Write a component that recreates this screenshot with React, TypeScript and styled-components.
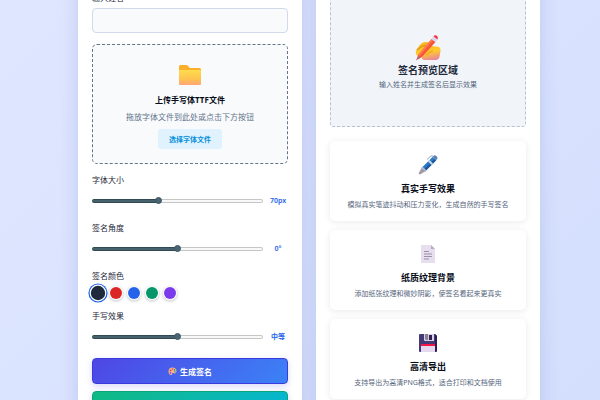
import React, { useState } from "react";
import styled, { createGlobalStyle } from "styled-components";

const GlobalStyle = createGlobalStyle`
  * { box-sizing: border-box; }
  body {
    margin: 0;
    font-family: "Noto Sans", "Noto Sans CJK SC", sans-serif;
    color: #060b18;
  }
  h2, h3, p { margin: 0; }
  button, input { font-family: inherit; }
`;

const Page = styled.main`
  height: 100vh;
  overflow: hidden;
  padding: 0 10% 0 13%;
  background: linear-gradient(135deg, #dfe6ff 0%, #dae3ff 50%, #d3dffd 100%);
`;

const Columns = styled.div`
  display: grid;
  grid-template-columns: 1fr 1fr;
  gap: 14px;
  margin-top: -60px;
`;

const Panel = styled.section`
  min-width: 0;
  padding: 52px 14px 14px;
  background: #ffffff;
  box-shadow: 0 6px 18px rgba(51, 65, 155, 0.16);
`;

const Label = styled.label`
  display: block;
  font-size: 8px;
  line-height: 12px;
  color: #1e293b;
`;

const ColorLegend = styled.legend`
  padding: 0;
  font-size: 8px;
  line-height: 12px;
  color: #1e293b;
`;

const NameInput = styled.input`
  display: block;
  width: 100%;
  height: 25px;
  margin: 4px 0 11px;
  padding: 0 8px;
  font-size: 9px;
  border: 1px solid #d0daea;
  border-radius: 4px;
  background: #f8fafc;
  outline: none;
`;

const UploadBox = styled.div`
  display: flex;
  flex-direction: column;
  align-items: center;
  height: 120px;
  margin-bottom: 10px;
  padding-top: 18px;
  border: 1px dashed #64748b;
  border-radius: 5px;
  background: #f8fafc;
  white-space: nowrap;
`;

const UploadTitle = styled.h3`
  margin-top: 6px;
  font-size: 8px;
  line-height: 14px;
  font-weight: 700;
`;

const UploadHint = styled.p`
  margin: 3px 0 5px;
  font-size: 8px;
  line-height: 14px;
  color: #64748b;
`;

const FileButton = styled.button`
  height: 20px;
  padding: 0 11px;
  border: 0;
  border-radius: 3px;
  background: #e0f2fe;
  color: #0890dc;
  font-size: 7px;
  font-weight: 600;
`;

const SliderField = styled.div`
  height: 48px;
`;

const SliderRow = styled.div`
  display: flex;
  align-items: center;
  gap: 5px;
  height: 12px;
  margin-top: 9px;
`;

const Range = styled.input<{ $fill: number }>`
  appearance: none;
  flex: 1;
  min-width: 0;
  height: 8px;
  margin: 0;
  background: transparent;

  &::-webkit-slider-runnable-track {
    height: 4px;
    border: 1px solid transparent;
    border-radius: 2px;
    background:
      linear-gradient(to right, #46626c ${(p) => p.$fill}%, #f8f8f8 ${(p) => p.$fill}%) padding-box,
      linear-gradient(to right, #304a53 ${(p) => p.$fill}%, #c6c6c6 ${(p) => p.$fill}%) border-box;
  }
  &::-webkit-slider-thumb {
    appearance: none;
    width: 7px;
    height: 7px;
    margin-top: -3px;
    border: 1px solid #3c5663;
    border-radius: 50%;
    background: #4a6572;
  }
`;

const RangeValue = styled.output`
  width: 20px;
  text-align: center;
  font-size: 7px;
  line-height: 12px;
  font-weight: 600;
  color: #2563eb;
  white-space: nowrap;
`;

const Swatches = styled.fieldset`
  height: 40px;
  min-width: 0;
  margin: 0;
  padding: 0;
  border: 0;
`;

const SwatchRow = styled.div`
  display: flex;
  align-items: center;
  gap: 6px;
  height: 12px;
  margin-top: 5px;
`;

const Swatch = styled.input<{ $color: string }>`
  appearance: none;
  width: 12px;
  height: 12px;
  margin: 0;
  border-radius: 50%;
  background: ${(p) => p.$color};
  box-shadow: 0 0 0 1px #ffffff, 0 1px 2px 2px rgba(15, 23, 42, 0.14);

  &:checked {
    transform: scale(1.2);
    box-shadow: 0 0 0 1px #ffffff, 0 0 0 2px #1d63e8;
  }
`;

const ActionButton = styled.button<{ $from: string; $to: string; $edge: string }>`
  display: flex;
  align-items: center;
  justify-content: center;
  gap: 3px;
  width: 100%;
  height: 26px;
  margin-bottom: 7px;
  border: 1px solid ${(p) => p.$edge};
  border-radius: 4px;
  background: linear-gradient(135deg, ${(p) => p.$from}, ${(p) => p.$to});
  box-shadow: 0 2px 6px rgba(79, 70, 229, 0.22);
  color: #ffffff;
  font-size: 8px;
  font-weight: 700;
`;

const Preview = styled.div`
  display: flex;
  flex-direction: column;
  align-items: center;
  height: 135px;
  margin-bottom: 14px;
  padding-top: 41px;
  border: 1px dashed #b4c2d3;
  border-radius: 4px;
  background: #f1f5f9;
  white-space: nowrap;
`;

const PreviewTitle = styled.h2`
  font-size: 10px;
  line-height: 16px;
  font-weight: 600;
  color: #1e293b;
`;

const Caption = styled.p`
  font-size: 7px;
  line-height: 14px;
  color: #55657c;
`;

const FeatureList = styled.div`
  display: grid;
  gap: 9px;
`;

const FeatureCard = styled.article`
  display: flex;
  flex-direction: column;
  align-items: center;
  height: 80px;
  padding-top: 13px;
  border-radius: 5px;
  background: #ffffff;
  box-shadow: 0 1px 7px rgba(15, 23, 42, 0.09);
  white-space: nowrap;
`;

const FeatureTitle = styled.h3`
  margin: 6px 0 2px;
  font-size: 9px;
  line-height: 14px;
  font-weight: 700;
`;

const FolderIcon = () => (
  <svg width="24" height="24" viewBox="0 0 24 24" aria-hidden="true">
    <defs>
      <linearGradient id="folder" x1="0" y1="0" x2="0" y2="1">
        <stop offset="0" stopColor="#ffdc4e" />
        <stop offset="0.6" stopColor="#ffc34f" />
        <stop offset="1" stopColor="#ffa477" />
      </linearGradient>
    </defs>
    <path d="M1 3.5Q1 2 2.500 2H9l3 3h9.500Q23 5 23 6.500V9H1Z" fill="#fbaf2b" />
    <rect x="1" y="7" width="22" height="15" rx="1" fill="url(#folder)" />
  </svg>
);

const WritingHandIcon = () => (
  <svg width="28" height="28" viewBox="0 0 28 28" aria-hidden="true">
    <defs>
      <linearGradient id="hand" x1="0.4" y1="0" x2="0.7" y2="1">
        <stop offset="0" stopColor="#f9b71f" />
        <stop offset="0.55" stopColor="#ffcb2d" />
        <stop offset="1" stopColor="#e9839c" />
      </linearGradient>
    </defs>
    <path d="M2 17C4 13 7 8 12 8c3 0 4 2 6 4l7 1q2 1 1.500 4l-1 6q-1 3-4 3H10q-3-1-2-3l-4-1q-3-1-2-5Z" fill="url(#hand)" />
    <path d="M3 16q4-4 9-5" fill="none" stroke="#e09a1c" strokeWidth="1.5" />
    <path d="M17.500 5l4 3L8 23l-4 2 0-4Z" fill="#f9553a" />
    <path d="M17.500 5l1.500 1L5.500 22 4 21Z" fill="#ff7d50" />
    <path d="M12 21q3-3 7-4" fill="none" stroke="#f0ab25" strokeWidth="1.500" />
    <path d="M17.500 5L19.500 2.500l4 3L21.500 8Z" fill="#d4d8f0" />
    <path d="M19.500 2.500q1-2 3-1T23.500 5.500Z" fill="#f43744" />
    <path d="M4 21.500l3 2-5 3Z" fill="#c4616b" />
  </svg>
);

const PenIcon = () => (
  <svg width="22" height="22" viewBox="0 0 22 22" aria-hidden="true">
    <path d="M4.500 14l3.500 3.500L3 20.500 1.500 19.500Z" fill="#a59ba6" />
    <path d="M4.500 14L15.500 3l3.500 3.500L8 17.500Z" fill="#2a79c8" />
    <path d="M6.500 16L17.500 5l1.500 1.500L8 17.500Z" fill="#1c5599" />
    <path d="M4.500 14l1.200-1.200L9.200 16.300 8 17.500Z" fill="#b8bcc9" />
    <path d="M11 7.500l1.500-1.500L16 9.500 14.500 11Z" fill="#c6d4e7" />
    <path d="M15.500 3l1.500-1.500q1-.7 2 .3l1 1q1 1 .3 2L19 6.500Z" fill="#5d83b5" />
    <path d="M10 5.500L14 2h2" fill="none" stroke="#9aa9bf" strokeWidth="1" />
  </svg>
);

const PaperIcon = () => (
  <svg width="22" height="22" viewBox="0 0 22 22" aria-hidden="true">
    <path d="M4 2h10l4 4v14H4Z" fill="#e7def0" />
    <path d="M14 2l4 4h-4Z" fill="#b9abc5" />
    <path d="M7 8.500h5M7 11h8M7 13.500h8M7 16h5" stroke="#9d91aa" strokeWidth="1" />
  </svg>
);

const DiskIcon = () => (
  <svg width="22" height="22" viewBox="0 0 22 22" aria-hidden="true">
    <path d="M3 2h15l2 2v15q0 1-1 1H3q-1 0-1-1V3q0-1 1-1Z" fill="#433a78" />
    <path d="M18 2l2 2v15l-2 1Z" fill="#321b52" />
    <path d="M7 2h10v7H8Q7 9 7 8Z" fill="#d9d1e6" />
    <path d="M8 2h3v6H9L8 7Z" fill="#8b8297" />
    <rect x="12" y="3" width="3" height="5" fill="#34204f" />
    <rect x="4" y="12" width="14" height="8" fill="#e5d9ef" />
    <rect x="4" y="12" width="14" height="2" fill="#f31743" />
  </svg>
);

const PaletteIcon = () => (
  <svg width="9" height="9" viewBox="0 0 18 18" aria-hidden="true">
    <path d="M9 1C4 1 1 4 1 9s3 8 6 7c2-1 0-3 2-4s3 2 5 1 3-3 3-5c0-4-4-7-8-7Z" fill="#f4b98e" />
    <circle cx="5" cy="7" r="2" fill="#e83e5d" />
    <circle cx="9" cy="4" r="1.800" fill="#f56544" />
    <circle cx="13" cy="6" r="1.800" fill="#38a96c" />
    <circle cx="14" cy="10" r="1.600" fill="#3583dc" />
    <circle cx="5" cy="12" r="1.800" fill="#a44ed4" />
  </svg>
);

type SliderProps = {
  id: string;
  label: string;
  min: number;
  max: number;
  initial: number;
  format: (value: number) => string;
};

const Slider = ({ id, label, min, max, initial, format }: SliderProps) => {
  const [value, setValue] = useState(initial);
  return (
    <SliderField>
      <Label htmlFor={id}>{label}</Label>
      <SliderRow>
        <Range
          id={id}
          type="range"
          min={min}
          max={max}
          value={value}
          $fill={((value - min) / (max - min)) * 100}
          onChange={(e) => setValue(Number(e.target.value))}
        />
        <RangeValue htmlFor={id}>{format(value)}</RangeValue>
      </SliderRow>
    </SliderField>
  );
};

const inks = [
  { name: "黑色", value: "#1e293b" },
  { name: "红色", value: "#dc2626" },
  { name: "蓝色", value: "#2563eb" },
  { name: "绿色", value: "#059669" },
  { name: "紫色", value: "#7c3aed" },
];

const features = [
  { icon: <PenIcon />, title: "真实手写效果", text: "模拟真实笔迹抖动和压力变化，生成自然的手写签名" },
  { icon: <PaperIcon />, title: "纸质纹理背景", text: "添加纸张纹理和微妙阴影，使签名看起来更真实" },
  { icon: <DiskIcon />, title: "高清导出", text: "支持导出为高清PNG格式，适合打印和文档使用" },
];

const strengths = ["轻微", "中等", "强烈"];

export default function App() {
  const [ink, setInk] = useState(inks[0].value);
  return (
    <>
      <GlobalStyle />
      <Page>
        <Columns>
          <Panel>
            <Label htmlFor="name">输入姓名</Label>
            <NameInput id="name" type="text" />
            <UploadBox>
              <FolderIcon />
              <UploadTitle>上传手写体TTF文件</UploadTitle>
              <UploadHint>拖放字体文件到此处或点击下方按钮</UploadHint>
              <FileButton type="button">选择字体文件</FileButton>
            </UploadBox>
            <Slider id="size" label="字体大小" min={20} max={150} initial={70} format={(v) => `${v}px`} />
            <Slider id="angle" label="签名角度" min={-30} max={30} initial={0} format={(v) => `${v}°`} />
            <Swatches>
              <ColorLegend>签名颜色</ColorLegend>
              <SwatchRow>
                {inks.map((c) => (
                  <Swatch
                    key={c.value}
                    type="radio"
                    name="ink"
                    aria-label={c.name}
                    $color={c.value}
                    checked={ink === c.value}
                    onChange={() => setInk(c.value)}
                  />
                ))}
              </SwatchRow>
            </Swatches>
            <Slider id="effect" label="手写效果" min={0} max={2} initial={1} format={(v) => strengths[v]} />
            <ActionButton type="button" $from="#4f46e5" $to="#3b82f6" $edge="#3a3ade">
              <PaletteIcon />
              生成签名
            </ActionButton>
            <ActionButton type="button" $from="#10b981" $to="#06b6d4" $edge="#0ba678" aria-label="下载签名" />
          </Panel>
          <Panel>
            <Preview>
              <WritingHandIcon />
              <PreviewTitle>签名预览区域</PreviewTitle>
              <Caption>输入姓名并生成签名后显示效果</Caption>
            </Preview>
            <FeatureList>
              {features.map((f) => (
                <FeatureCard key={f.title}>
                  {f.icon}
                  <FeatureTitle>{f.title}</FeatureTitle>
                  <Caption>{f.text}</Caption>
                </FeatureCard>
              ))}
            </FeatureList>
          </Panel>
        </Columns>
      </Page>
    </>
  );
}
